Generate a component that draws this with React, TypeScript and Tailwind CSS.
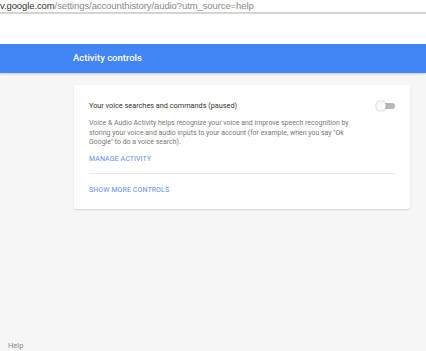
import React from "react";

const Toggle = () => (
    <div className="relative w-[19px] h-[10px] flex items-center">
        <div className="w-[16px] h-[6px] ml-[3px] rounded-full bg-[#b9b9b9]" />
        <div className="absolute left-0 top-0 w-[10px] h-[10px] rounded-full bg-[#fafafa] shadow-[0_0_1.5px_rgba(0,0,0,0.45)]" />
    </div>
);

const App = () => {
    return (
        <div className="w-[426px] h-[351px] bg-[#f6f6f6] flex flex-col overflow-hidden font-['Roboto',sans-serif]">
            <div className="h-[12px] bg-white flex items-center text-[9.5px] leading-none font-['Liberation_Sans',sans-serif] tracking-[-0.1px] whitespace-nowrap">
                <span className="text-[#333]">v.google.com</span>
                <span className="text-[#8a8a8a]">/settings/accounthistory/audio?utm_source=help</span>
            </div>
            <div className="h-[2px] bg-[#d4d4d4]" />
            <div className="h-[30px] bg-white" />
            <div className="h-[29px] bg-[#4285f4] flex items-center pl-[73px] shadow-[0_1px_2px_rgba(0,0,0,0.2)] z-10">
                <h1 className="text-white text-[9.5px] font-medium">Activity controls</h1>
            </div>
            <div className="pt-[12px] pl-[74px]">
                <div className="w-[336px] h-[124px] bg-white rounded-[2px] shadow-[0_1px_1.5px_rgba(0,0,0,0.15)] px-[15px] pt-[16px]">
                    <div className="flex items-center justify-between">
                        <span className="text-[7.3px] text-[#333]">Your voice searches and commands (paused)</span>
                        <Toggle />
                    </div>
                    <p className="mt-[7px] text-[6.95px] leading-[9.6px] text-[#777] pr-[30px]">
                        Voice &amp; Audio Activity helps recognize your voice and improve speech recognition by storing your voice and audio inputs to your account (for example, when you say "Ok Google" to do a voice search).
                    </p>
                    <div className="mt-[6px] text-[7px] text-[#5c8df6] tracking-[0.1px]">MANAGE ACTIVITY</div>
                    <div className="mt-[9px] border-t border-[#ebebeb]" />
                    <div className="mt-[11px] text-[7px] text-[#5c8df6] tracking-[0.1px]">SHOW MORE CONTROLS</div>
                </div>
            </div>
            <div className="mt-auto pl-[8px] pb-0 text-[7.5px] text-[#888]">Help</div>
        </div>
    );
};

export default App;
